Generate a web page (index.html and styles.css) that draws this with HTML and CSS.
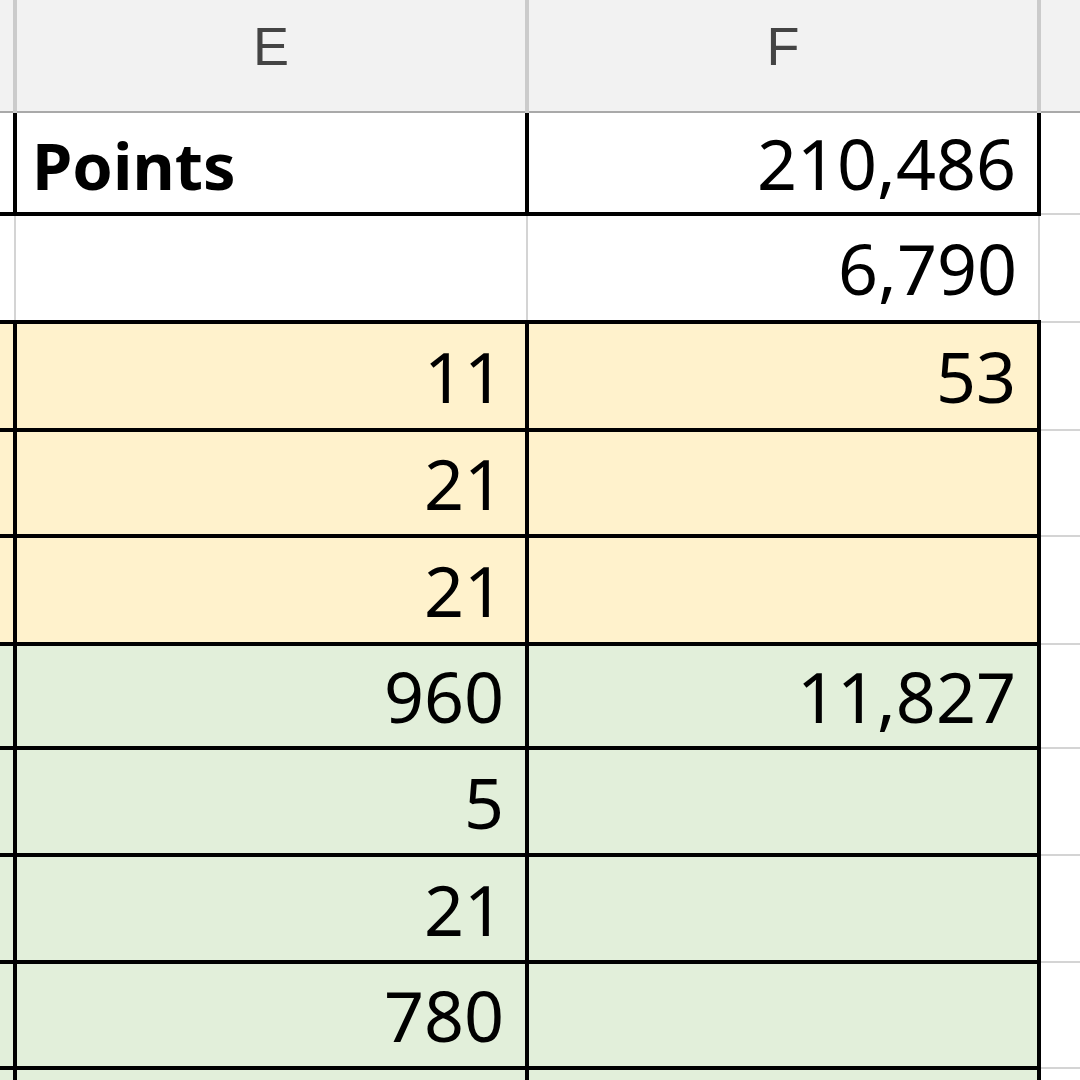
FILE: index.html
```html
<!DOCTYPE html>
<html>
<head>
<meta charset="utf-8">
<link rel="stylesheet" href="styles.css">
</head>
<body>
<table class="sheet">
  <colgroup>
    <col class="c-edge"><col class="c-e"><col class="c-f"><col class="c-rest">
  </colgroup>
  <tr class="hdr">
    <td class="edge"></td><td class="hl">E</td><td class="hl">F</td><td></td>
  </tr>
  <tr class="r1">
    <td class="edge bd-r"></td><td class="bd txt-l"><b>Points</b></td><td class="bd num">210,486</td><td class="bd-l"></td>
  </tr>
  <tr class="r2">
    <td class="edge"></td><td class="num"></td><td class="num">6,790</td><td></td>
  </tr>
  <tr class="r3 y">
    <td class="edge fill bd-r"></td><td class="bd num">11</td><td class="bd num">53</td><td class="bd-l"></td>
  </tr>
  <tr class="r4 y">
    <td class="edge fill bd-r"></td><td class="bd num">21</td><td class="bd num"></td><td class="bd-l"></td>
  </tr>
  <tr class="r5 y">
    <td class="edge fill bd-r"></td><td class="bd num">21</td><td class="bd num"></td><td class="bd-l"></td>
  </tr>
  <tr class="r6 g">
    <td class="edge fill bd-r"></td><td class="bd num">960</td><td class="bd num">11,827</td><td class="bd-l"></td>
  </tr>
  <tr class="r7 g">
    <td class="edge fill bd-r"></td><td class="bd num">5</td><td class="bd num"></td><td class="bd-l"></td>
  </tr>
  <tr class="r8 g">
    <td class="edge fill bd-r"></td><td class="bd num">21</td><td class="bd num"></td><td class="bd-l"></td>
  </tr>
  <tr class="r9 g">
    <td class="edge fill bd-r"></td><td class="bd num">780</td><td class="bd num"></td><td class="bd-l"></td>
  </tr>
  <tr class="r10 g">
    <td class="edge fill bd-r"></td><td class="bd num"></td><td class="bd num"></td><td class="bd-l"></td>
  </tr>
</table>
</body>
</html>
```

FILE: styles.css
```css
html, body {
  margin: 0;
  padding: 0;
  width: 1080px;
  height: 1080px;
  overflow: hidden;
  background: #ffffff;
}

.sheet {
  border-collapse: collapse;
  table-layout: fixed;
  width: 1100px;
  font-family: "Noto Sans", "Open Sans", sans-serif;
  color: #000;
}

.c-edge { width: 15px; }
.c-e { width: 512px; }
.c-f { width: 512px; }
.c-rest { width: 61px; }

.sheet td {
  border: 2px solid #d4d4d4;
  padding: 0;
  font-size: 70px;
  line-height: 1;
  vertical-align: middle;
  overflow: hidden;
  white-space: nowrap;
}

.sheet td.edge { border-left: none; }

.hdr td {
  background: #f2f2f2;
  border-left: 4px solid #cbcbcb;
  border-right: 4px solid #cbcbcb;
  border-top: none;
  border-bottom: 2px solid #a9a9a9;
  height: 91px;
  padding-bottom: 20px;
}

.hdr .hl {
  font-family: "Liberation Sans", Arial, sans-serif;
  font-size: 54px;
  color: #444;
  text-align: center;
}

.r1 td { height: 99px; }
.r2 td { height: 104px; }
.r3 td { height: 104px; }
.r4 td { height: 102px; }
.r5 td { height: 104px; }
.r6 td { height: 100px; }
.r7 td { height: 103px; }
.r8 td { height: 103px; }
.r9 td { height: 102px; }
.r10 td { height: 60px; }

.sheet td.bd {
  border: 4px solid #000;
}

.r1 td.bd { border-top: none; }

.sheet td.bd-r { border-right: 4px solid #000; }
.sheet td.bd-l { border-left: 4px solid #000; }

.r2 td.edge, .r2 td.num { border-top: 4px solid #000; }
.r3 td.edge { border-top: 4px solid #000; }
.y td.edge, .g td.edge { border-bottom: 4px solid #000; }

.y td.fill, .y td.bd { background: #fff2cc; }
.g td.fill, .g td.bd { background: #e2efda; }

.num {
  text-align: right;
  padding-right: 21px !important;
}

.txt-l {
  text-align: left;
  padding-left: 15px !important;
}

.txt-l b {
  font-weight: 700;
  font-size: 65px;
}
```
